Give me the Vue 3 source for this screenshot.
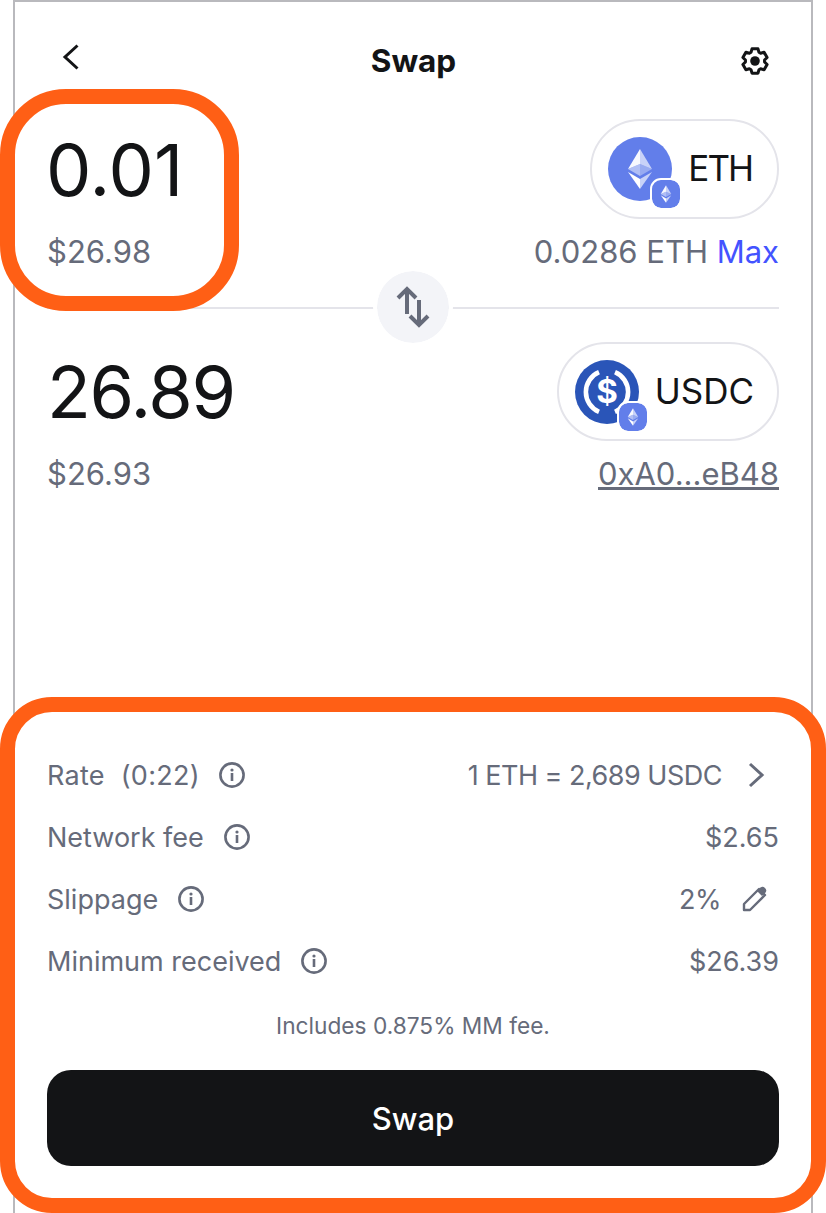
<template>
  <div class="page">
    <svg class="defs" width="0" height="0" aria-hidden="true">
      <symbol id="ethMark" viewBox="0 0 64 64">
        <polygon points="32,12 20,32 32,27" fill="#fff" fill-opacity="0.95" />
        <polygon points="32,12 44,32 32,27" fill="#fff" fill-opacity="0.65" />
        <polygon points="32,27 20,32 32,39" fill="#fff" fill-opacity="0.5" />
        <polygon points="32,27 44,32 32,39" fill="#fff" fill-opacity="0.35" />
        <polygon points="20,35 32,42 32,52" fill="#fff" />
        <polygon points="44,35 32,42 32,52" fill="#fff" fill-opacity="0.65" />
      </symbol>
    </svg>

    <div class="frame">
      <header class="header">
        <svg class="back" viewBox="0 0 18 28" fill="none">
          <path d="M15.500 2.500 3 14l12.500 11.500" stroke="#131416" stroke-width="3" />
        </svg>
        <h1 class="title">Swap</h1>
        <svg class="gear" viewBox="0 0 28 28" fill="none">
          <path :d="gearPath" stroke="#131416" stroke-width="3" stroke-linejoin="round" />
          <circle cx="14" cy="14" r="4.8" fill="#131416" />
        </svg>
      </header>

      <section class="amountRow">
        <div class="amount first">0.01</div>
        <button class="pill">
          <span class="tokenIcon">
            <svg viewBox="0 0 64 64">
              <circle cx="32" cy="32" r="32" fill="#627eea" />
              <use href="#ethMark" />
            </svg>
            <span class="badge">
              <svg viewBox="0 0 64 64"><use href="#ethMark" /></svg>
            </span>
          </span>
          <span class="tokenName ethText">ETH</span>
        </button>
      </section>
      <div class="subRow">
        <span>$26.98</span>
        <span>0.0286 ETH <a class="max">Max</a></span>
      </div>

      <div class="divider">
        <span class="swapBtn">
          <svg viewBox="0 0 36 44" fill="none" stroke="#666b7a" stroke-width="4">
            <path d="M12 4v25M3 13l9-9 9 9" />
            <path d="M24 15v25M15 31l9 9 9-9" />
          </svg>
        </span>
      </div>

      <section class="amountRow second">
        <div class="amount">26.89</div>
        <button class="pill">
          <span class="tokenIcon">
            <svg viewBox="0 0 64 64">
              <circle cx="32" cy="32" r="32" fill="#2a55b8" />
              <path d="M24 12.200A21.500 21.500 0 0 0 24 51.800" fill="none" stroke="#fff" stroke-width="4.6" />
              <path d="M40 12.200A21.500 21.500 0 0 1 40 51.800" fill="none" stroke="#fff" stroke-width="4.6" />
              <text x="32" y="43" text-anchor="middle" class="dollar">$</text>
            </svg>
            <span class="badge">
              <svg viewBox="0 0 64 64"><use href="#ethMark" /></svg>
            </span>
          </span>
          <span class="tokenName">USDC</span>
        </button>
      </section>
      <div class="subRow">
        <span>$26.93</span>
        <a class="address">0xA0...eB48</a>
      </div>

      <section class="details">
        <div class="row" v-for="row in rows" :key="row.label">
          <span class="label" :class="{ wide: row.wide }">
            <span>{{ row.label }}</span>
            <svg class="info" viewBox="0 0 26 26" fill="none">
              <circle cx="13" cy="13" r="11.6" stroke="#666b7a" stroke-width="2.6" />
              <circle cx="13" cy="8" r="1.6" fill="#666b7a" />
              <rect x="11.7" y="11" width="2.6" height="8" fill="#666b7a" />
            </svg>
          </span>
          <span class="value" :class="{ tight: row.icon }">
            <span>{{ row.value }}</span>
            <svg v-if="row.icon === 'chevron'" class="chevron" viewBox="0 0 18 26" fill="none">
              <path d="M3 2l12 11L3 24" stroke="#666b7a" stroke-width="3" />
            </svg>
            <svg v-if="row.icon === 'pencil'" class="pencil" viewBox="0 0 26 26" fill="none">
              <path d="M2 24v-6L17 3l6 6L8 24z" stroke="#666b7a" stroke-width="2.4" stroke-linejoin="round" />
              <path d="M15 5l3.500-3.500c1.500-1.200 3-1 4.500.5s1.700 3 .5 4.500L20 10z" fill="#666b7a" />
            </svg>
          </span>
        </div>
        <p class="note">Includes 0.875% MM fee.</p>
        <button class="swap">Swap</button>
      </section>
    </div>

    <div class="highlight amountMark"></div>
    <div class="highlight detailsMark"></div>
  </div>
</template>

<script setup>
const rows = [
  { label: 'Rate\u00a0\u00a0(0:22)', value: '1 ETH = 2,689 USDC', icon: 'chevron', wide: true },
  { label: 'Network fee', value: '$2.65' },
  { label: 'Slippage', value: '2%', icon: 'pencil' },
  { label: 'Minimum received', value: '$26.39' }
];

// six-tooth gear outline, tooth on top
const gearPath = (() => {
  const c = 14;
  const parts = [];
  for (let i = 0; i < 6; i++) {
    const a = (i * Math.PI) / 3 - Math.PI / 2;
    const pts = [
      [9.6, -0.42],
      [12.6, -0.24],
      [12.6, 0.24],
      [9.6, 0.42]
    ];
    pts.forEach(([r, d]) => {
      const x = c + r * Math.cos(a + d);
      const y = c + r * Math.sin(a + d);
      parts.push(`${x.toFixed(2)} ${y.toFixed(2)}`);
    });
  }
  return `M${parts.join('L')}Z`;
})();
</script>

<style scoped>
.page {
  position: relative;
  width: 826px;
  height: 1213px;
  overflow: hidden;
  background: #fff;
  font-family: Inter, "Liberation Sans", sans-serif;
  color: #131416;
}

.defs {
  position: absolute;
}

.frame {
  box-sizing: border-box;
  width: 800px;
  height: 1213px;
  margin-left: 13px;
  padding: 0 32px 47px;
  border: 2px solid #b9b9bd;
  border-bottom: 0;
  display: flex;
  flex-direction: column;
}

.header {
  height: 117px;
  display: flex;
  align-items: center;
  justify-content: space-between;
}

.back {
  width: 18px;
  height: 28px;
  margin-left: 15px;
  margin-top: -7px;
}

.title {
  margin: 0 0 0 6px;
  font-size: 31.5px;
  font-weight: 700;
}

.gear {
  width: 28px;
  height: 28px;
  margin-right: 10px;
}

.amountRow {
  height: 100px;
  display: flex;
  align-items: center;
  justify-content: space-between;
}

.amountRow.second {
  height: 99px;
  margin-top: 9px;
}

.amount {
  font-size: 72px;
  font-weight: 400;
  letter-spacing: -1.3px;
}

.amount.first {
  margin-left: -1px;
  letter-spacing: 0;
}

.pill {
  height: 100%;
  box-sizing: border-box;
  display: flex;
  align-items: center;
  gap: 16px;
  padding: 0 23px 0 16px;
  border: 2px solid #e4e4ea;
  border-radius: 50px;
  background: #fff;
  font: inherit;
  font-size: 35px;
  font-weight: 400;
  color: #131416;
}

.tokenName {
  margin-top: -2px;
}

.ethText {
  letter-spacing: -2px;
  margin-right: 2px;
}

.tokenIcon {
  position: relative;
  width: 64px;
  height: 64px;
  display: block;
}

.tokenIcon > svg {
  display: block;
  width: 64px;
  height: 64px;
}

.badge {
  position: absolute;
  right: -8px;
  bottom: -7px;
  width: 28px;
  height: 28px;
  border-radius: 9px;
  background: #627eea;
  outline: 2px solid #fff;
  display: block;
}

.badge svg {
  display: block;
  width: 28px;
  height: 28px;
}

.dollar {
  font-family: Inter, "Liberation Sans", sans-serif;
  font-size: 33px;
  font-weight: 700;
  fill: #fff;
}

.subRow {
  height: 64px;
  display: flex;
  align-items: center;
  justify-content: space-between;
  font-size: 31px;
  color: #666b7a;
}

.max {
  color: #4353ff;
}

.address {
  text-decoration: underline;
}

.divider {
  height: 50px;
  display: flex;
  align-items: center;
  justify-content: center;
  background: linear-gradient(#e4e4ea, #e4e4ea) center / 100% 2px no-repeat;
}

.swapBtn {
  width: 72px;
  height: 72px;
  flex: none;
  margin-top: -2px;
  border-radius: 50%;
  background: #f3f4f8;
  outline: 4px solid #fff;
  display: flex;
  align-items: center;
  justify-content: center;
}

.swapBtn svg {
  width: 36px;
  height: 44px;
}

.details {
  margin-top: auto;
}

.row {
  height: 62px;
  display: flex;
  align-items: center;
  justify-content: space-between;
  font-size: 27px;
  color: #666b7a;
}

.label,
.value {
  display: flex;
  align-items: center;
}

.label {
  gap: 20px;
}

.label.wide {
  gap: 19px;
  letter-spacing: 0.3px;
}

.value {
  gap: 25px;
}

.value.tight {
  letter-spacing: -0.5px;
}

.info {
  width: 26px;
  height: 26px;
}

.chevron {
  width: 18px;
  height: 26px;
  margin-right: 14px;
}

.pencil {
  width: 26px;
  height: 26px;
  margin-left: -4px;
  margin-right: 11px;
}

.note {
  height: 30px;
  margin: 19px 0 29px;
  text-align: center;
  font-size: 22.7px;
  line-height: 30px;
  color: #666b7a;
}

.swap {
  display: block;
  width: 100%;
  height: 96px;
  border: 0;
  border-radius: 24px;
  background: #131416;
  color: #fff;
  font: inherit;
  font-size: 31px;
  font-weight: 500;
}

.highlight {
  position: absolute;
  box-sizing: border-box;
  border: 15px solid #ff5f15;
  background: transparent;
}

.amountMark {
  left: 0;
  top: 89px;
  width: 239px;
  height: 222px;
  border-radius: 66px;
}

.detailsMark {
  left: 0;
  top: 697px;
  width: 826px;
  height: 516px;
  border-radius: 52px;
  box-shadow: inset 0 0 0 2px #fff;
}
</style>
